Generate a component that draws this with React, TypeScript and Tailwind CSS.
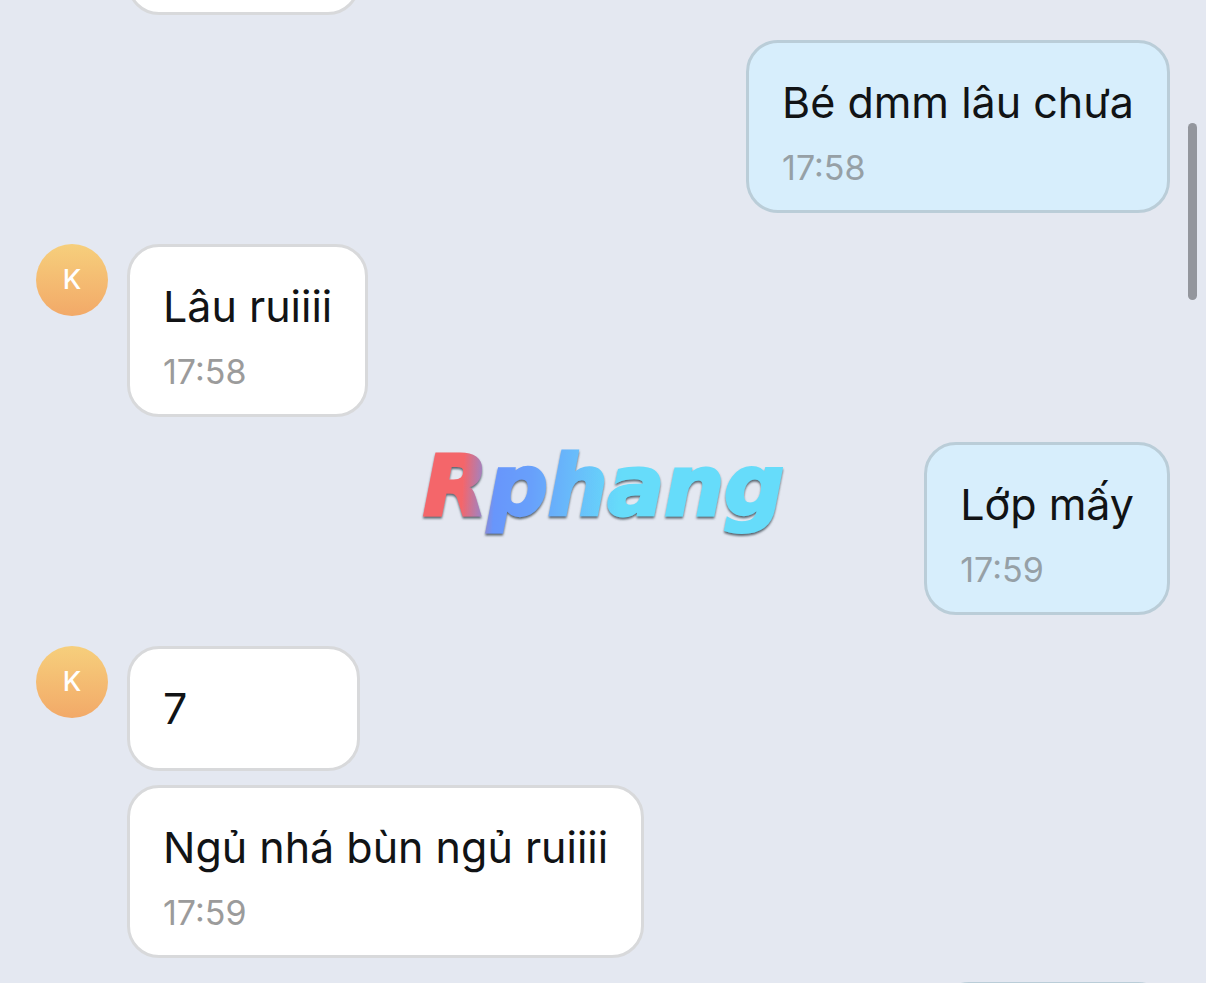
import React from 'react';
import clsx from 'clsx';

interface Message {
  id: string;
  text: string;
  time?: string;
}

interface MessageGroup {
  id: string;
  mine: boolean;
  initial?: string;
  messages: Message[];
}

const groups: MessageGroup[] = [
  {
    id: 'g1',
    mine: true,
    messages: [{ id: 'm1', text: 'Bé dmm lâu chưa', time: '17:58' }],
  },
  {
    id: 'g2',
    mine: false,
    initial: 'K',
    messages: [{ id: 'm2', text: 'Lâu ruiiii', time: '17:58' }],
  },
  {
    id: 'g3',
    mine: true,
    messages: [{ id: 'm3', text: 'Lớp mấy', time: '17:59' }],
  },
  {
    id: 'g4',
    mine: false,
    initial: 'K',
    messages: [
      { id: 'm4', text: '7' },
      { id: 'm5', text: 'Ngủ nhá bùn ngủ ruiiii', time: '17:59' },
    ],
  },
];

const Bubble: React.FC<{ mine: boolean; text?: string; time?: string }> = ({ mine, text, time }) => (
  <div
    className={clsx(
      'min-w-[233px] rounded-[32px] border-[3px] px-[33px] pt-8 pb-[33px]',
      mine ? 'border-[#bacdd8] bg-[#d7eefc]' : 'border-[#d8d9db] bg-white'
    )}
  >
    <p className="min-h-[54px] text-[43px] leading-[54px] text-[#111315]">{text}</p>
    {time && (
      <time
        className={clsx(
          'mt-[30px] block text-[34px] leading-[18px]',
          mine ? 'text-[#96a0a6]' : 'text-[#9b9b9b]'
        )}
      >
        {time}
      </time>
    )}
  </div>
);

const Avatar: React.FC<{ initial?: string }> = ({ initial }) => (
  <div className="flex size-[72px] shrink-0 items-center justify-center rounded-full bg-linear-to-b from-[#f6cf7c] to-[#f2a968] text-[27px] font-medium text-white">
    {initial}
  </div>
);

const Watermark: React.FC = () => (
  <div className="pointer-events-none absolute inset-0 flex items-center justify-center">
    <svg viewBox="0 0 380 110" className="h-[110px] w-[380px]" role="img" aria-label="Rphang">
      <defs>
        <linearGradient id="brand" gradientUnits="userSpaceOnUse" x1="10" y1="50" x2="370" y2="70">
          <stop offset="0" stopColor="#f4666b" />
          <stop offset="0.11" stopColor="#f4666b" />
          <stop offset="0.2" stopColor="#6896fb" />
          <stop offset="0.3" stopColor="#68a0fb" />
          <stop offset="0.55" stopColor="#66dcfa" />
          <stop offset="1" stopColor="#66dcfa" />
        </linearGradient>
        <filter id="shade" x="-5%" y="-10%" width="110%" height="125%">
          <feDropShadow dx="0" dy="2" stdDeviation="0.8" floodColor="#4a5560" floodOpacity="0.9" />
        </filter>
      </defs>
      <text
        x="10"
        y="78"
        fill="url(#brand)"
        stroke="url(#brand)"
        strokeWidth="3"
        filter="url(#shade)"
        className="font-['DejaVu_Sans',sans-serif] text-[84px] font-bold italic"
      >
        Rphang
      </text>
    </svg>
  </div>
);

export default function App() {
  return (
    <main className="relative h-screen overflow-hidden bg-[#e4e8f1] font-['Inter',sans-serif]">
      <div className="-mt-[110px] flex flex-col px-9">
        {/* Older message, scrolled past the top edge */}
        <div className="flex pl-[91px]">
          <Bubble mine={false} />
        </div>

        {groups.map((group) =>
          group.mine ? (
            <section key={group.id} className="mt-[25px] flex flex-col items-end gap-[14px]">
              {group.messages.map((message) => (
                <Bubble key={message.id} mine text={message.text} time={message.time} />
              ))}
            </section>
          ) : (
            <section key={group.id} className="mt-[31px] flex items-start gap-[19px]">
              <Avatar initial={group.initial} />
              <div className="flex flex-col items-start gap-[14px]">
                {group.messages.map((message) => (
                  <Bubble key={message.id} mine={false} text={message.text} time={message.time} />
                ))}
              </div>
            </section>
          )
        )}

        {/* Next reply, just entering at the bottom */}
        <div className="mt-6 flex justify-end">
          <Bubble mine />
        </div>
      </div>

      <Watermark />

      <div className="absolute top-[123px] right-[9px] h-[177px] w-[9px] rounded-full bg-[#93969d]" />
    </main>
  );
}
